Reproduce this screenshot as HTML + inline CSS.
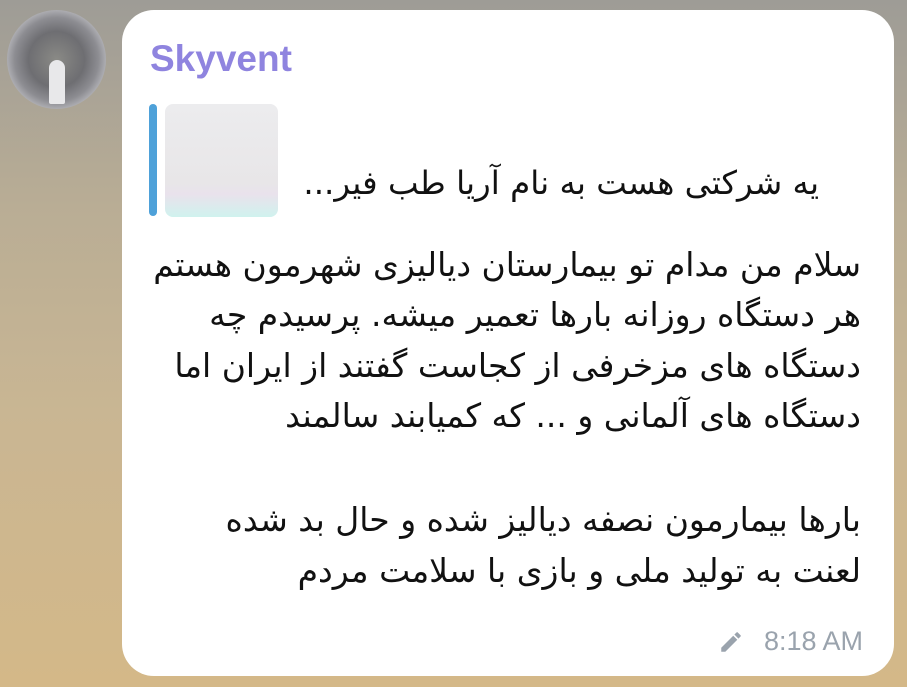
<!DOCTYPE html>
<html><head><meta charset="utf-8"><style>
body{margin:0;width:907px;height:687px;overflow:hidden;position:relative;
background:linear-gradient(180deg,#9e9c96 0%,#b9ad95 30%,#c9b693 60%,#d4b888 100%);font-family:"DejaVu Sans","Liberation Sans",sans-serif;}
.av{position:absolute;left:7px;top:10px;width:99px;height:99px;border-radius:50%;
background:radial-gradient(circle at 50% 50%,#8a8a86 0%,#6e6e72 40%,#8d8d92 60%,#d8d8dc 85%,#fff 100%);}
.av:after{content:"";position:absolute;left:42px;top:50px;width:16px;height:44px;border-radius:8px 8px 2px 2px;background:#e8e8ea;}
.b{position:absolute;left:122px;top:10px;width:772px;height:666px;background:#fff;border-radius:32px;}
.name{position:absolute;left:150px;top:38px;font-family:"Liberation Sans",sans-serif;font-weight:bold;font-size:37px;color:#8f84df;}
.bar{position:absolute;left:149px;top:104px;width:8px;height:112px;border-radius:4px;background:#4ea1d9;}
.th{position:absolute;left:165px;top:104px;width:113px;height:113px;border-radius:8px;background:linear-gradient(180deg,#ececee 0%,#e8e6e8 70%,#e9e2ec 80%,#d0f2ee 100%);}
.q{position:absolute;right:88px;top:163px;font-size:32.5px;direction:rtl;white-space:nowrap;color:#111;line-height:40px;}
.l{position:absolute;right:46px;font-size:33px;direction:rtl;white-space:nowrap;color:#111;line-height:40px;}
.t{position:absolute;right:44px;top:626px;font-family:"Liberation Sans",sans-serif;font-size:27px;color:#9aa3ad;}
</style></head><body>
<div class="av"></div>
<div class="b"></div>
<div class="name">Skyvent</div>
<div class="bar"></div><div class="th"></div>
<div class="q">یه شرکتی هست به نام آریا طب فیر...</div>
<div class="l" style="top:245px">سلام من مدام تو بیمارستان دیالیزی شهرمون هستم</div>
<div class="l" style="top:295px">هر دستگاه روزانه بارها تعمیر میشه. پرسیدم چه</div>
<div class="l" style="top:346px">دستگاه های مزخرفی از کجاست گفتند از ایران اما</div>
<div class="l" style="top:396px">دستگاه های آلمانی و ... که کمیابند سالمند</div>
<div class="l" style="top:500px">بارها بیمارمون نصفه دیالیز شده و حال بد شده</div>
<div class="l" style="top:551px">لعنت به تولید ملی و بازی با سلامت مردم</div>
<svg style="position:absolute;left:718px;top:629px" width="26" height="26" viewBox="0 0 24 24"><path fill="#9aa3ad" d="M3 17.25V21h3.75L17.81 9.94l-3.75-3.75L3 17.25zM20.71 7.04a1 1 0 0 0 0-1.41l-2.34-2.34a1 1 0 0 0-1.41 0l-1.83 1.83 3.75 3.75 1.83-1.83z"/></svg>
<div class="t">8:18 AM</div>
</body></html>
